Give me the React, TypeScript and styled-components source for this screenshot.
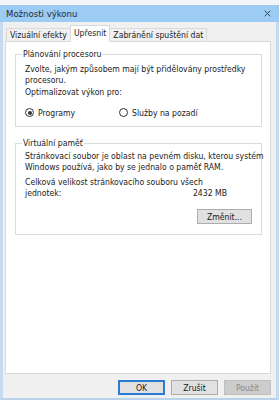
import styled, { createGlobalStyle } from 'styled-components';

const FONT = `"Liberation Sans Narrow", "DejaVu Sans Condensed", "Liberation Sans", sans-serif`;

const GlobalStyle = createGlobalStyle`
  html, body {
    margin: 0;
    padding: 0;
    background: #f3f5f8;
  }
  body {
    font-family: ${FONT};
    font-size: 8.6px;
    color: #222;
  }
`;

const Window = styled.div`
  margin-top: 5px;
  width: 279px;
  height: 395px;
  box-sizing: border-box;
  border-left: 3px solid #c6dbef;
  border-right: 3px solid #c6dbef;
  border-bottom: 2px solid #b9d3ec;
  background: #f0f0f0;
  display: flex;
  flex-direction: column;
`;

const TitleBar = styled.div`
  height: 17px;
  margin: 0 -3px;
  background: #9ccbf3;
  display: flex;
  align-items: center;
  justify-content: space-between;
  padding: 0 8px 0 6px;
`;

const Title = styled.span`
  font-size: 9.5px;
  color: #1f2a36;
`;

const CloseIcon = styled.svg`
  width: 7px;
  height: 7px;
`;

const Body = styled.div`
  flex: 1;
  display: flex;
  flex-direction: column;
  padding: 3px 5px 0 2px;
`;

const TabRow = styled.div`
  display: flex;
  align-items: flex-end;
  margin-left: 1px;
  position: relative;
  z-index: 1;
  margin-bottom: -1px;
`;

const Tab = styled.div<{ $active?: boolean }>`
  height: ${({ $active }) => ($active ? '15px' : '12px')};
  line-height: ${({ $active }) => ($active ? '14px' : '12px')};
  padding: 0 3px;
  margin-left: ${({ $active }) => ($active ? '-1px' : '0')};
  margin-right: ${({ $active }) => ($active ? '-1px' : '0')};
  border: 1px solid #d9d9d9;
  border-bottom: ${({ $active }) => ($active ? '1px solid #fff' : '1px solid #d9d9d9')};
  background: ${({ $active }) => ($active ? '#ffffff' : '#f0f0f0')};
  white-space: nowrap;
  position: relative;
  z-index: ${({ $active }) => ($active ? 2 : 1)};
`;

const Panel = styled.div`
  height: 333px;
  box-sizing: border-box;
  background: #ffffff;
  border: 1px solid #d9d9d9;
  padding: 7px 8px 0 9px;
  display: flex;
  flex-direction: column;
  gap: 11px;
`;

const Group = styled.fieldset<{ $bottom: number }>`
  margin: 0;
  min-width: 0;
  min-inline-size: 0;
  border: 1px solid #dcdcdc;
  padding: 0 9px ${({ $bottom }) => $bottom}px 9px;
  display: flex;
  flex-direction: column;
`;

const Legend = styled.legend`
  padding: 0 1px;
  margin-left: -3px;
  line-height: 11px;
`;

const Text = styled.p<{ $top?: number }>`
  margin: ${({ $top }) => $top ?? 0}px 0 0 0;
  line-height: 11px;
  white-space: nowrap;
`;

const RadioRow = styled.div`
  display: flex;
  margin-top: 9px;
  height: 11px;
`;

const RadioItem = styled.label`
  display: flex;
  align-items: center;
  gap: 4px;
  width: 94px;
  white-space: nowrap;
`;

const RadioCircle = styled.span<{ $checked?: boolean }>`
  width: 9px;
  height: 9px;
  box-sizing: border-box;
  border-radius: 50%;
  border: 1px solid #333;
  background: #fff;
  display: flex;
  align-items: center;
  justify-content: center;
  &::after {
    content: '';
    width: 4px;
    height: 4px;
    border-radius: 50%;
    background: ${({ $checked }) => ($checked ? '#333' : 'transparent')};
  }
`;

const SizeRow = styled.div`
  display: flex;
  justify-content: space-between;
  line-height: 11px;
  padding-right: 25px;
`;

const ButtonRow = styled.div`
  display: flex;
  justify-content: flex-end;
  margin-top: 10px;
`;

const Button = styled.button<{ $default?: boolean; $disabled?: boolean }>`
  width: 47px;
  height: 15px;
  padding: 0;
  box-sizing: border-box;
  font-family: ${FONT};
  font-size: 8.6px;
  background: ${({ $disabled }) => ($disabled ? '#cccccc' : '#e1e1e1')};
  color: ${({ $disabled }) => ($disabled ? '#8a8a8a' : '#1a1a1a')};
  border: ${({ $default, $disabled }) =>
    $default ? '2px solid #2b7ad4' : $disabled ? '1px solid #bfbfbf' : '1px solid #adadad'};
`;

const WideButton = styled(Button)`
  width: 55px;
`;

const Footer = styled.div`
  display: flex;
  justify-content: flex-end;
  gap: 6px;
  padding: 6px 0 0 0;
`;

export default function App() {
  return (
    <>
      <GlobalStyle />
      <Window>
        <TitleBar>
          <Title>Možnosti výkonu</Title>
          <CloseIcon viewBox="0 0 10 10">
            <path d="M1 1L9 9M9 1L1 9" stroke="#2a3a4a" strokeWidth="1.3" />
          </CloseIcon>
        </TitleBar>
        <Body>
          <TabRow>
            <Tab>Vizuální efekty</Tab>
            <Tab $active>Upřesnit</Tab>
            <Tab>Zabránění spuštění dat</Tab>
          </TabRow>
          <Panel>
            <Group $bottom={8}>
              <Legend>Plánování procesoru</Legend>
              <Text $top={4}>Zvolte, jakým způsobem mají být přidělovány prostředky</Text>
              <Text>procesoru.</Text>
              <Text $top={1}>Optimalizovat výkon pro:</Text>
              <RadioRow>
                <RadioItem>
                  <RadioCircle $checked />
                  Programy
                </RadioItem>
                <RadioItem>
                  <RadioCircle />
                  Služby na pozadí
                </RadioItem>
              </RadioRow>
            </Group>
            <Group $bottom={10}>
              <Legend>Virtuální paměť</Legend>
              <Text $top={2}>Stránkovací soubor je oblast na pevném disku, kterou systém</Text>
              <Text>Windows používá, jako by se jednalo o paměť RAM.</Text>
              <Text $top={4}>Celková velikost stránkovacího souboru všech</Text>
              <SizeRow>
                <span>jednotek:</span>
                <span>2432 MB</span>
              </SizeRow>
              <ButtonRow>
                <WideButton>Změnit...</WideButton>
              </ButtonRow>
            </Group>
          </Panel>
          <Footer>
            <Button $default>OK</Button>
            <Button>Zrušit</Button>
            <Button $disabled>Použít</Button>
          </Footer>
        </Body>
      </Window>
    </>
  );
}
